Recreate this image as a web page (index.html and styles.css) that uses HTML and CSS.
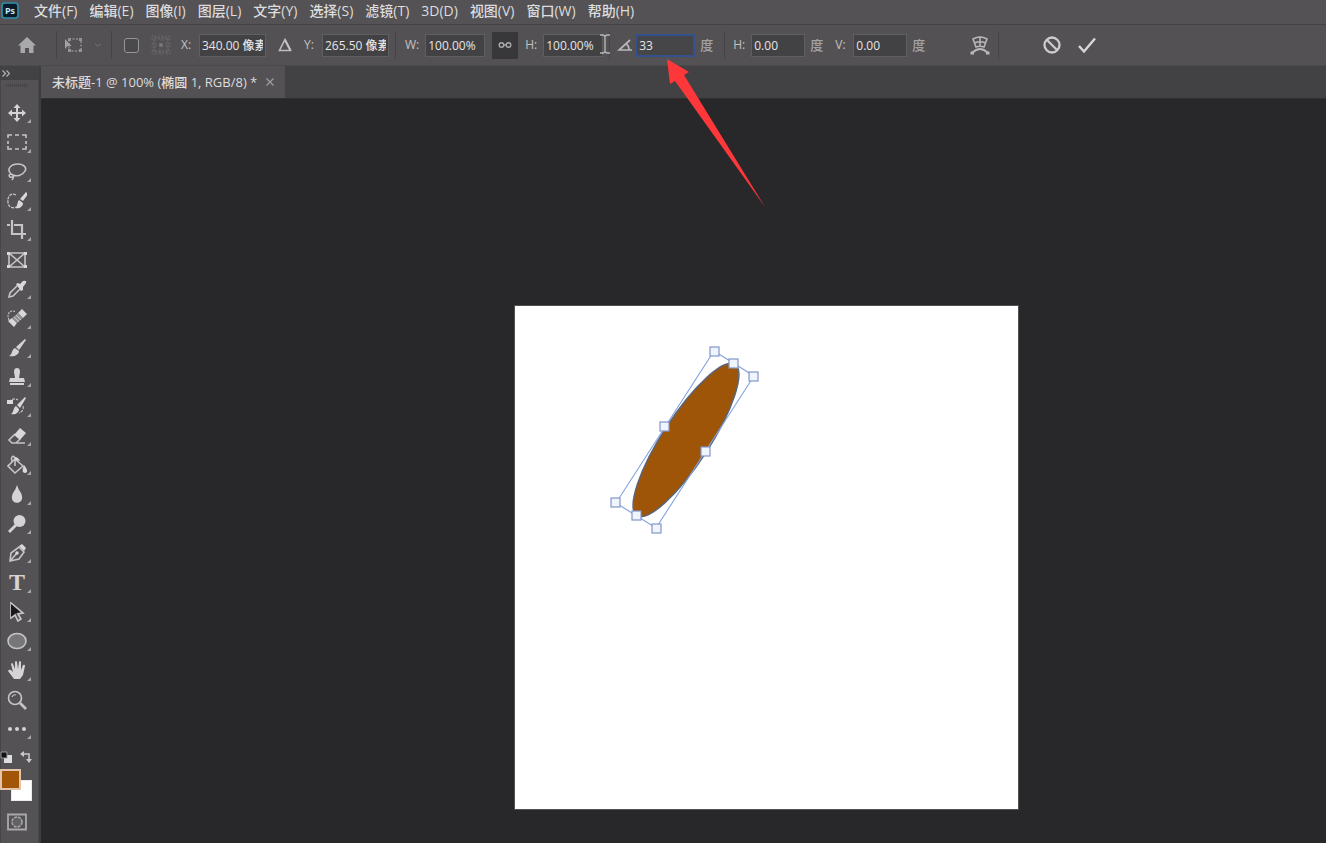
FILE: index.html
```html
<!DOCTYPE html>
<html lang="zh-CN">
<head>
<meta charset="utf-8">
<title>未标题-1 @ 100% (椭圆 1, RGB/8)</title>
<link rel="stylesheet" href="styles.css">
</head>
<body>
<div class="app">
  <header class="menubar">
    <svg class="logo" viewBox="0 0 18 18" aria-hidden="true"><rect x="1" y="1" width="16" height="15" rx="3" fill="#0b1c28" stroke="#2f90ad" stroke-width="1.6"/><text x="9" y="12" text-anchor="middle" class="logo-text">Ps</text></svg>
    <nav class="menu" aria-label="主菜单">
      <button>文件(F)</button><button>编辑(E)</button><button>图像(I)</button><button>图层(L)</button><button>文字(Y)</button><button>选择(S)</button><button>滤镜(T)</button><button>3D(D)</button><button>视图(V)</button><button>窗口(W)</button><button>帮助(H)</button>
    </nav>
  </header>

  <form class="options">
    <div class="group group-home">
      <button type="button" class="icon-btn" aria-label="主页"><svg width="20" height="20" viewBox="0 0 20 20"><path d="M10 2 1 10.500h2.500V18H8v-5h4v5h4.500v-7.500H19z" fill="#a9a8aa"/></svg></button>
    </div>
    <div class="group group-mode">
      <button type="button" class="icon-btn" aria-label="变换"><svg width="20" height="20" viewBox="0 0 20 20" fill="none"><rect x="5" y="4" width="12" height="12" stroke="#8d8c8e" stroke-width="1.500" stroke-dasharray="2 1.500"/><path d="M1 4v10l2.500-3h4z" fill="#a3a2a4"/><path d="M4 3h3v3H4zM15 3h3v3h-3zM4 14h3v3H4zM15 14h3v3h-3z" fill="#939294"/></svg></button>
      <svg class="chev" viewBox="0 0 8 6" fill="none"><path d="m1 2 3 2 3-2" stroke="#737274"/></svg>
    </div>
    <div class="group group-pos">
      <input class="check" type="checkbox" aria-label="切换参考点">
      <svg class="refpoint" viewBox="0 0 20 20" fill="none" stroke="#6d6c6e"><path d="M3 3h14v14H3z" stroke-dasharray="2 1.500"/><path d="M1 1h4v4H1zM8 1h4v4H8zM15 1h4v4h-4zM1 8h4v4H1zM15 8h4v4h-4zM1 15h4v4H1zM8 15h4v4H8zM15 15h4v4h-4z" stroke-dasharray="1 1"/><path d="M8.500 8.500h3v3h-3z" fill="#7b7a7c"/></svg>
      <div class="field"><label for="x">X:</label><input id="x" class="wide" value="340.00 像素"></div>
      <button type="button" class="icon-btn delta" aria-label="使用相对定位"><svg width="14" height="14" viewBox="0 0 14 14" fill="none"><path d="M7 1.500 12.500 12.500h-11z" stroke="#bdbcbe" stroke-width="1.600"/><path d="m7 2 5.500 10.500" stroke="#c3c2c4" stroke-width="2"/></svg></button>
      <div class="field"><label for="y">Y:</label><input id="y" class="wide" value="265.50 像素"></div>
    </div>
    <div class="group group-size">
      <div class="field"><label for="w">W:</label><input id="w" class="mid" value="100.00%"></div>
      <button type="button" class="link-btn" aria-label="保持长宽比"><svg width="14" height="8" viewBox="0 0 14 8" fill="none" stroke="#a9a8aa" stroke-width="1.400"><circle cx="3.500" cy="4" r="2.300"/><circle cx="10.500" cy="4" r="2.300"/><path d="M5 4h4"/></svg></button>
      <div class="field ibeam-host"><label for="h">H:</label><input id="h" class="mid" value="100.00%"><svg class="ibeam" viewBox="0 0 12 20" fill="none" stroke="#b5b4b6" stroke-width="1.400"><path d="M1 1h3l2 1 2-1h3M6 2v16M1 19h3l2-1 2 1h3"/></svg></div>
    </div>
    <div class="group group-angle">
      <svg width="16" height="14" viewBox="0 0 16 14" fill="none" stroke="#b9b8ba" stroke-width="1.700"><path d="M13 2 2 12h13M9 6c2 1 3 3 3 6"/></svg>
      <div class="field"><input class="mid active" aria-label="旋转角度" value="33"><span class="unit">度</span></div>
    </div>
    <div class="group group-skew">
      <div class="field"><label for="sh">H:</label><input id="sh" class="narrow" value="0.00"><span class="unit">度</span></div>
      <div class="field"><label for="sv">V:</label><input id="sv" class="narrow" value="0.00"><span class="unit">度</span></div>
    </div>
    <div class="group group-warp">
      <button type="button" class="icon-btn" aria-label="变形"><svg width="20" height="20" viewBox="0 0 20 20" fill="none" stroke="#b9b8ba" stroke-width="1.500"><path d="M3 4Q10 0 17 4L14 12q-4-1.500-8 0zM4.500 8Q10 5.500 15.500 8M10 2v9"/><path d="M2 18q8-8 16 0" stroke-width="1.800"/><path d="M.5 16.500h3.500v3H.5zM16 16.500h3.500v3H16z" fill="#b9b8ba" stroke="none"/></svg></button>
    </div>
    <div class="group group-commit">
      <button type="button" class="icon-btn" aria-label="取消变换"><svg width="20" height="20" viewBox="0 0 20 20" fill="none" stroke="#cccbcd" stroke-width="2.300"><circle cx="10" cy="10" r="7.500"/><path d="m4.500 4.500 11 11"/></svg></button>
      <button type="submit" class="icon-btn" aria-label="提交变换"><svg width="20" height="20" viewBox="0 0 20 20" fill="none" stroke="#d8d7d9" stroke-width="2.400"><path d="m2 11 5 5.500L18 3.500"/></svg></button>
    </div>
  </form>

  <div class="main">
    <aside class="side">
      <button class="expand" aria-label="展开工具栏"><svg width="8" height="7" viewBox="0 0 8 7" fill="none" stroke="#b4b3b5" stroke-width="1.200"><path d="m.5.5 3 3-3 3M4.500.5l3 3-3 3"/></svg></button>
      <div class="tools-panel">
        <div class="grip"></div>
        <div class="tools" role="toolbar" aria-label="工具">
          <button class="tool more" aria-label="移动"><svg viewBox="0 0 20 20"><path d="M10 1 13.500 5H11v4h4V6.500l4 3.500-4 3.500V11h-4v4h2.500L10 19l-3.500-4H9v-4H5v2.500L1 10l4-3.500V9h4V5H6.500z"/></svg></button>
          <button class="tool more line" aria-label="矩形选框"><svg viewBox="0 0 20 20"><path d="M1 6V3h4M8 3h4M15 3h4v3M19 9v3M19 14v3h-4M12 17H8M5 17H1v-3M1 12V9"/></svg></button>
          <button class="tool more line" aria-label="套索"><svg viewBox="0 0 20 20"><path d="M4 12C-1 7 4 2 11 2c6 0 9 4 7 7-2 4-8 6-12 4M6 13c-3-2-5 0-3 2 2 1 4-1 3-2m0 1c1 2 0 3-1 4"/></svg></button>
          <button class="tool more line" aria-label="快速选择"><svg viewBox="0 0 20 20"><path d="M9 4C4 1 0 6 1 11c0 5 5 7 8 5" stroke-width="1.300" stroke-dasharray="3 1"/><path class="fill" d="m19 1 2 2-5 7-3-2zM12 9l4 3c0 4-4 6-8 5 3-2 2-6 4-8z"/></svg></button>
          <button class="tool more line" aria-label="裁剪"><svg viewBox="0 0 20 20"><path d="M5 0v14h11M0 5h3M7 5h8v14M15 14h4" stroke-width="2.200"/></svg></button>
          <button class="tool line" aria-label="图框"><svg viewBox="0 0 20 20"><path d="M2 3h16v14H2zM2 3l16 14M18 3 2 17"/><path class="fill" d="M0 2h3v3H0zM17 2h3v3h-3zM0 15h3v3H0zM17 15h3v3h-3z"/></svg></button>
          <button class="tool more line" aria-label="吸管"><svg viewBox="0 0 20 20"><path d="m11 6-8 8-1 4 4-1 8-8"/><path class="fill" d="m9 5 2-1 2 1 3-3q4-1 3 2l-3 4v3l-2 1z"/></svg></button>
          <button class="tool more line" aria-label="修复画笔"><svg viewBox="0 0 20 20"><path d="M2 12C-1 5 4 1 9 4" stroke-width="1.200" stroke-dasharray="2 1"/><path class="fill" d="m15 1 5 5-4 4-5-5zM5 10l5 5-3 4-6-6z"/><path d="m11 5 5 5-6 5-5-5z" class="muted"/><path d="m9 7 5 5M7 9l5 5" stroke-width="1"/></svg></button>
          <button class="tool more" aria-label="画笔"><svg viewBox="0 0 20 20"><path d="m18 1 1 1-7 10-3-3zM8 10l4 3c0 4-5 6-10 5 4-2 2-6 6-8z"/></svg></button>
          <button class="tool more" aria-label="仿制图章"><svg viewBox="0 0 20 20"><path d="M8 11 7 5q0-4 3-4t3 4l-1 6h5l1 4H2l1-4zM3 16h14v2H3z"/></svg></button>
          <button class="tool more line" aria-label="历史记录画笔"><svg viewBox="0 0 20 20"><path d="M2 6c2-3 6-4 9-2M16 10c1 3-1 6-4 7" stroke-width="1.200" stroke-dasharray="3 1"/><path class="fill" d="M0 4h6v4H0zM18 1l1 1-6 10-3-3zM9 10l3 3c0 4-4 6-8 5 3-2 2-6 5-8z"/></svg></button>
          <button class="tool more line" aria-label="橡皮擦"><svg viewBox="0 0 20 20"><path d="m8 8-6 6 3 3h4l4-4M9 17h9"/><path class="fill" d="m13 2 6 5-6 7-6-5z"/></svg></button>
          <button class="tool more line" aria-label="油漆桶"><svg viewBox="0 0 20 20"><path d="m8 4 8 7-8 7-7-7zM8 11V4q-1-4-3-2-1 1 0 4"/><path class="fill" d="M8 2q3 0 5 4l-5-1zM17 10q4 5 3 7-2 2-4 0-1-2 1-7z"/></svg></button>
          <button class="tool more" aria-label="模糊"><svg viewBox="0 0 20 20"><path d="M10 1q1 4 4 8c6 13-14 13-8 0q3-4 4-8z"/></svg></button>
          <button class="tool more" aria-label="减淡"><svg viewBox="0 0 20 20"><circle cx="12.500" cy="7" r="6"/><path d="m8 10 2 2-7 7-2-2z"/></svg></button>
          <button class="tool more line" aria-label="钢笔"><svg viewBox="0 0 20 20"><path d="m3 18 1-8 8-6 5 5-5 7zM3 18l7-8"/><circle class="fill" cx="10" cy="10" r="1.700"/><path class="fill" d="m12 3 3-2 4 4-2 3z"/></svg></button>
          <button class="tool more" aria-label="横排文字"><span class="type">T</span></button>
          <button class="tool more" aria-label="路径选择"><svg viewBox="0 0 20 20"><path d="M4 1v15l4-3 3 6 3-2-3-5 5-1z" fill="#545355" stroke="#c9c8ca" stroke-width="1.600"/><path d="m4 2 9 8-4 1-5 4z" fill="#19191b"/></svg></button>
          <button class="tool more line" aria-label="椭圆"><svg viewBox="0 0 20 20"><ellipse cx="10" cy="10" rx="9" ry="7.500" fill="#777678"/></svg></button>
          <button class="tool more" aria-label="抓手"><svg viewBox="0 0 20 20"><path d="M7 19 1 11q1-2 3-1l2 2-2-8q1-2 2 0l2 5V2q1-2 2 0l1 7 1-7q1-2 2 0v8l2-5q2-1 2 1l-2 9-3 4z"/></svg></button>
          <button class="tool line" aria-label="缩放"><svg viewBox="0 0 20 20"><circle cx="8" cy="8" r="6.500"/><path d="M5 7q1-3 4-2" stroke-width="1.200"/><path d="m13 13 6 6" stroke-width="2.600"/></svg></button>
          <button class="tool more" aria-label="编辑工具栏"><svg viewBox="0 0 20 20"><circle cx="3" cy="10" r="2"/><circle cx="10" cy="10" r="2"/><circle cx="17" cy="10" r="2"/></svg></button>
        </div>
        <div class="color-actions">
          <button aria-label="默认颜色"><svg width="12" height="12" viewBox="0 0 12 12"><path d="M4 4h8v8H4z" fill="#dddcde"/><path d="M1 1h6v6H1z" fill="#111" stroke="#99989a"/></svg></button>
          <button aria-label="切换颜色"><svg width="12" height="12" viewBox="0 0 12 12" fill="none" stroke="#cac9cb" stroke-width="1.500"><path d="M3 3h6v6"/><path d="M4 0v6L0 3zM6 8h6l-3 4z" fill="#cac9cb" stroke="none"/></svg></button>
        </div>
        <div class="swatches">
          <button class="swatch back" aria-label="背景色"></button>
          <button class="swatch front" aria-label="前景色"></button>
        </div>
        <button class="mask" aria-label="快速蒙版"><svg width="22" height="18" viewBox="0 0 22 18" fill="none" stroke="#a9a8aa" stroke-width="1.800"><path d="M2 1.500h18v15H2z"/><circle cx="11" cy="9" r="5" fill="#626163" stroke-width="1.500" stroke-dasharray="3 1"/></svg></button>
      </div>
    </aside>

    <section class="document">
      <div class="tabs">
        <div class="tab"><span>未标题-1 @ 100% (椭圆 1, RGB/8) *</span><button class="close" aria-label="关闭"><svg width="8" height="8" viewBox="0 0 8 8" stroke="#9f9ea0" stroke-width="1.200"><path d="m.5.5 7 7M7.500.5l-7 7"/></svg></button></div>
      </div>
      <main class="workspace">
        <div class="artboard">
          <svg viewBox="0 0 503 503" role="img" aria-label="旋转 33 度的椭圆">
            <ellipse cx="171" cy="134" rx="23.500" ry="90" transform="rotate(33 171 134)" fill="#9f5507" stroke="#596579" stroke-width="1.500"/>
            <path d="M199 45 239 70 141 222 101 197z" fill="none" stroke="#83a2df" stroke-width="1.100"/>
            <g fill="#f0f4fd" stroke="#8296c8" stroke-width="1.200">
              <rect x="195" y="41" width="9" height="9"/><rect x="214" y="53" width="9" height="9"/><rect x="234" y="66" width="9" height="9"/><rect x="186" y="141" width="9" height="9"/><rect x="137" y="218" width="9" height="9"/><rect x="117" y="205" width="9" height="9"/><rect x="96" y="192" width="9" height="9"/><rect x="145" y="116" width="9" height="9"/>
            </g>
          </svg>
        </div>
      </main>
    </section>
  </div>
  <svg class="pointer" viewBox="0 0 100 150" aria-hidden="true"><path d="M1 1 23 14 18 17 99 149 9 23 4 26z" fill="#fd373a"/></svg>
</div>
</body>
</html>
```
FILE: styles.css
```css
* { box-sizing: border-box; }

body {
  margin: 0;
  background: #28282a;
  color: #dddcde;
  font: 500 12px/16px "Open Sans", "Noto Sans CJK SC", sans-serif;
}

button {
  margin: 0;
  padding: 0;
  border: 0;
  background: none;
  color: inherit;
  font: inherit;
}

svg { display: block; flex: none; }

.app {
  position: relative;
  display: flex;
  flex-direction: column;
  min-height: 100vh;
  overflow: hidden;
}

.menubar {
  display: flex;
  align-items: center;
  height: 24px;
  padding: 0 0 2px 1px;
  background: #545255;
}

.logo { width: 18px; height: 18px; }
.logo-text { fill: #c5e6f5; font-size: 9px; font-weight: 700; }

.menu {
  display: flex;
  gap: 12px;
  padding-left: 15px;
  font-size: 14px;
  line-height: 20px;
}
.menu button { white-space: nowrap; }

.options {
  display: flex;
  align-items: center;
  height: 42px;
  border-top: 1px solid #434244;
  border-bottom: 1px solid #4a494b;
  background: #535154;
}

.group {
  display: flex;
  align-items: center;
  height: 28px;
  border-right: 1px solid #444345;
}
.group-home { padding: 0 19px 0 17px; }
.group-mode { gap: 10px; padding: 0 9px 0 7px; }
.group-pos { gap: 12px; padding: 0 6px 0 12px; }
.group-size { gap: 7px; padding: 0 6px 0 9px; }
.group-size .field:first-child { gap: 6px; }
.group-angle { gap: 2px; padding: 0 11px 0 7px; }
.group-skew { gap: 12px; padding: 0 0 0 8px; border: 0; }
.group-warp { padding: 0 8px 0 45px; }
.group-commit { gap: 15px; padding-left: 43px; border: 0; }

.chev { width: 8px; height: 6px; }
.refpoint { width: 20px; height: 20px; margin-right: -2px; }

.check {
  appearance: none;
  width: 15px;
  height: 15px;
  margin: 0;
  border: 1px solid #969597;
  border-radius: 3px;
  background: #4a494b;
}

.field { display: flex; align-items: center; gap: 5px; }
.field label { min-width: 13px; color: #c3c2c4; }
.field input {
  height: 23px;
  padding: 0 2px;
  border: 1px solid #5f5e60;
  border-radius: 0;
  outline: 0;
  background: #424143;
  color: #e6e5e7;
  font: inherit;
}
.field .wide { width: 67px; }
.field .mid { width: 60px; }
.field .narrow { width: 54px; }
.field .active { border: 2px solid #34518e; background: #464547; }
.unit { color: #a2a1a3; font-size: 13px; }

.ibeam-host { position: relative; }
.ibeam { position: absolute; right: -8px; top: 0; width: 12px; height: 20px; }

.link-btn {
  display: grid;
  place-items: center;
  width: 26px;
  height: 27px;
  background: #38373a;
}

.main { display: flex; flex: 1; }

.side {
  display: flex;
  flex-direction: column;
  width: 41px;
  border-right: 2px solid #3d3c3e;
  background: #545255;
}
.expand {
  height: 14px;
  padding-left: 2px;
  background: #424143;
}
.tools-panel {
  flex: 1;
  padding-top: 4px;
  border-left: 1px solid #464547;
  border-right: 1px solid #4b4a4c;
}
.grip {
  width: 22px;
  height: 3px;
  margin: 0 0 11px 5px;
  background: repeating-linear-gradient(90deg, #454446 0 1px, #504f51 1px 2px);
}

.tools { display: flex; flex-direction: column; }
.tool {
  position: relative;
  display: grid;
  justify-content: start;
  align-content: center;
  height: 29px;
  padding-left: 6px;
  fill: #d4d3d5;
}
.tool:nth-child(3n+2) { height: 30px; }
.tool svg { width: 20px; height: 20px; }
.line { fill: none; stroke: #c5c4c6; stroke-width: 1.600; }
.line .fill { fill: #d8d7d9; stroke: none; }
.line .muted { fill: #929193; stroke: none; }
.more::after {
  position: absolute;
  right: 7px;
  bottom: 4px;
  border-bottom: 4px solid #a9a8aa;
  border-left: 4px solid transparent;
  content: "";
}
.type {
  width: 20px;
  color: #d4d3d5;
  font: 700 24px/24px "Liberation Serif", serif;
  text-align: center;
}

.color-actions { display: flex; gap: 8px; padding-top: 8px; }
.color-actions button:first-child { margin-left: -1px; }
.swatches {
  display: grid;
  width: 32px;
  margin: 6px 0 12px -1px;
}
.swatch { grid-area: 1 / 1; width: 21px; height: 21px; }
.back { margin: 11px 0 0 11px; background: #fff; border: 1px solid #eceaec; }
.front { z-index: 1; border: 2px solid #e1c4aa; background: #a15507; }
.mask { padding-left: 5px; }

.document { display: flex; flex: 1; flex-direction: column; min-width: 0; }
.tabs {
  display: flex;
  height: 33px;
  border-bottom: 1px solid #303032;
  background: #424143;
}
.tab {
  display: flex;
  align-items: center;
  gap: 9px;
  padding: 0 11px;
  background: #535154;
  font-size: 13px;
  white-space: nowrap;
}

.workspace { flex: 1; padding: 206px 0 33px 473px; background: #28282a; }
.artboard { width: 505px; border: 1px solid #515153; background: #fff; }

.pointer {
  position: absolute;
  top: 58px;
  left: 666px;
  width: 100px;
  height: 150px;
}
```
